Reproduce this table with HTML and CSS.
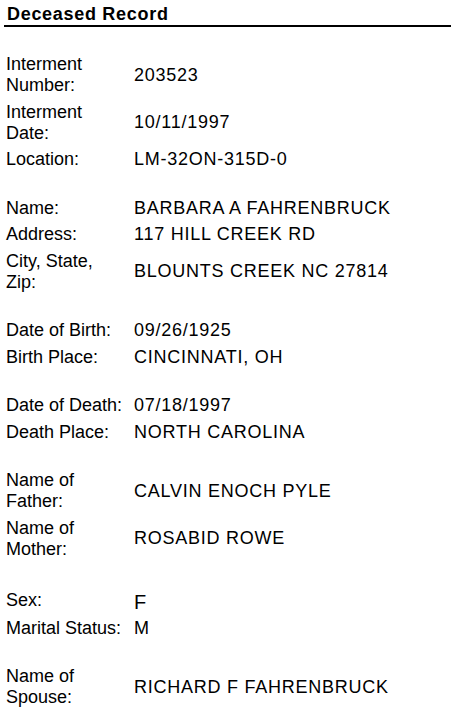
FILE: index.html
```html
<!DOCTYPE html>
<html lang="en">
<head>
    <meta charset="UTF-8">
    <meta name="viewport" content="width=device-width, initial-scale=1.0">
    <title>Deceased Record</title>
    <link rel="stylesheet" href="styles.css">
</head>
<body>
    <div class="record">
        <h1 class="record-title">Deceased Record</h1>

        <table class="record-table">
            <tr><td class="label">Interment Number:</td><td class="value">203523</td></tr>
            <tr><td class="label">Interment Date:</td><td class="value">10/11/1997</td></tr>
            <tr><td class="label">Location:</td><td class="value">LM-32ON-315D-0</td></tr>
            <tr class="spacer"><td colspan="2"></td></tr>

            <tr><td class="label">Name:</td><td class="value">BARBARA A FAHRENBRUCK</td></tr>
            <tr><td class="label">Address:</td><td class="value">117 HILL CREEK RD</td></tr>
            <tr><td class="label">City, State, Zip:</td><td class="value">BLOUNTS CREEK NC 27814</td></tr>
            <tr class="spacer"><td colspan="2"></td></tr>

            <tr><td class="label">Date of Birth:</td><td class="value">09/26/1925</td></tr>
            <tr><td class="label">Birth Place:</td><td class="value">CINCINNATI, OH</td></tr>
            <tr class="spacer"><td colspan="2"></td></tr>

            <tr><td class="label">Date of Death:</td><td class="value">07/18/1997</td></tr>
            <tr><td class="label">Death Place:</td><td class="value">NORTH CAROLINA</td></tr>
            <tr class="spacer"><td colspan="2"></td></tr>

            <tr><td class="label">Name of Father:</td><td class="value">CALVIN ENOCH PYLE</td></tr>
            <tr><td class="label">Name of Mother:</td><td class="value">ROSABID ROWE</td></tr>
            <tr class="spacer tall"><td colspan="2"></td></tr>

            <tr><td class="label">Sex:</td><td class="value big">F</td></tr>
            <tr><td class="label">Marital Status:</td><td class="value">M</td></tr>
            <tr class="spacer"><td colspan="2"></td></tr>

            <tr><td class="label">Name of Spouse:</td><td class="value">RICHARD F FAHRENBRUCK</td></tr>
        </table>
    </div>
</body>
</html>
```

FILE: styles.css
```css
body {
    margin: 0;
    background-color: #fff;
    color: #000;
    font-family: "Liberation Sans", Arial, sans-serif;
    font-size: 18px;
    line-height: 21px;
}
.record {
    padding: 4px 0 0 4px;
}
.record-title {
    margin: 0;
    padding-left: 3px;
    font-size: 18px;
    line-height: 21px;
    font-weight: bold;
    letter-spacing: 0.7px;
    border-bottom: 2px solid #000;
}
.record-table {
    margin-top: 24px;
    margin-left: -4px;
    border-collapse: collapse;
}
.record-table td {
    padding: 3px 0 2.5px 0;
    vertical-align: middle;
}
.label {
    width: 120px;
    padding-left: 6px !important;
}
.value {
    padding-left: 8px !important;
    letter-spacing: 0.75px;
}
.record-table .value.big {
    font-size: 20px;
    line-height: 23px;
    padding-top: 5px;
    padding-bottom: 0.5px;
}
.spacer td {
    height: 22px;
    padding: 0;
}
.spacer.tall td {
    height: 24px;
}
```
